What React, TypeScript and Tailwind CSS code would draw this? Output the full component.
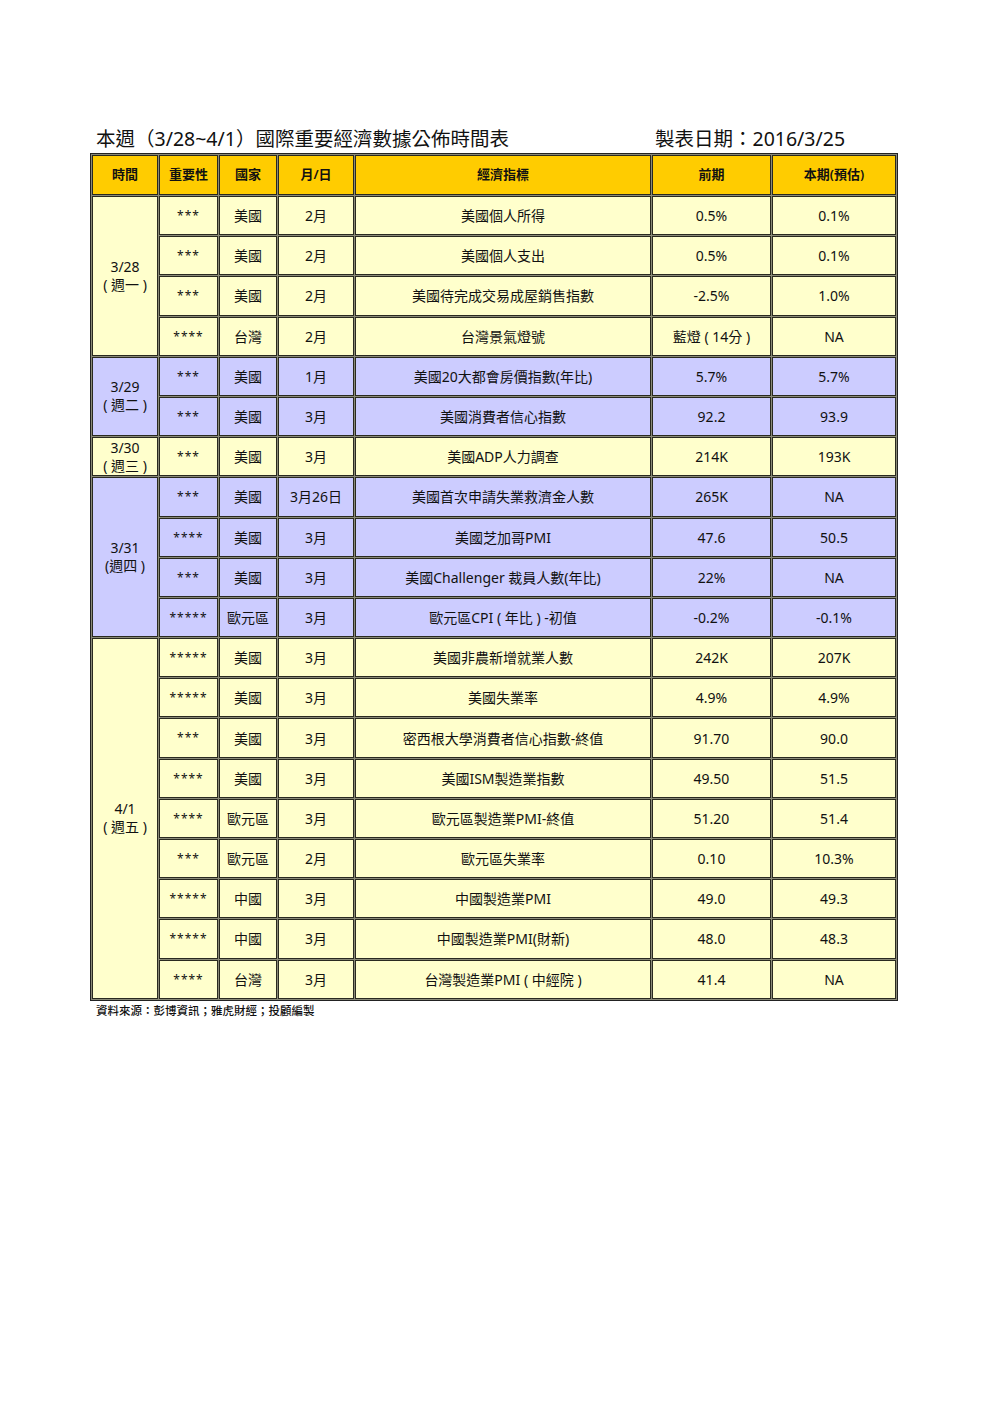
import React from "react";

type Row = {
  stars: string;
  country: string;
  month: string;
  name: string;
  prev: string;
  est: string;
};

type Group = {
  date: string;
  day: string;
  blue: boolean;
  rows: Row[];
};

const groups: Group[] = [
  {
    date: "3/28",
    day: "( 週一 )",
    blue: false,
    rows: [
      { stars: "***", country: "美國", month: "2月", name: "美國個人所得", prev: "0.5%", est: "0.1%" },
      { stars: "***", country: "美國", month: "2月", name: "美國個人支出", prev: "0.5%", est: "0.1%" },
      { stars: "***", country: "美國", month: "2月", name: "美國待完成交易成屋銷售指數", prev: "-2.5%", est: "1.0%" },
      { stars: "****", country: "台灣", month: "2月", name: "台灣景氣燈號", prev: "藍燈 ( 14分 )", est: "NA" },
    ],
  },
  {
    date: "3/29",
    day: "( 週二 )",
    blue: true,
    rows: [
      { stars: "***", country: "美國", month: "1月", name: "美國20大都會房價指數(年比)", prev: "5.7%", est: "5.7%" },
      { stars: "***", country: "美國", month: "3月", name: "美國消費者信心指數", prev: "92.2", est: "93.9" },
    ],
  },
  {
    date: "3/30",
    day: "( 週三 )",
    blue: false,
    rows: [
      { stars: "***", country: "美國", month: "3月", name: "美國ADP人力調查", prev: "214K", est: "193K" },
    ],
  },
  {
    date: "3/31",
    day: "(週四 )",
    blue: true,
    rows: [
      { stars: "***", country: "美國", month: "3月26日", name: "美國首次申請失業救濟金人數", prev: "265K", est: "NA" },
      { stars: "****", country: "美國", month: "3月", name: "美國芝加哥PMI", prev: "47.6", est: "50.5" },
      { stars: "***", country: "美國", month: "3月", name: "美國Challenger 裁員人數(年比)", prev: "22%", est: "NA" },
      { stars: "*****", country: "歐元區", month: "3月", name: "歐元區CPI ( 年比 ) -初值", prev: "-0.2%", est: "-0.1%" },
    ],
  },
  {
    date: "4/1",
    day: "( 週五 )",
    blue: false,
    rows: [
      { stars: "*****", country: "美國", month: "3月", name: "美國非農新增就業人數", prev: "242K", est: "207K" },
      { stars: "*****", country: "美國", month: "3月", name: "美國失業率", prev: "4.9%", est: "4.9%" },
      { stars: "***", country: "美國", month: "3月", name: "密西根大學消費者信心指數-終值", prev: "91.70", est: "90.0" },
      { stars: "****", country: "美國", month: "3月", name: "美國ISM製造業指數", prev: "49.50", est: "51.5" },
      { stars: "****", country: "歐元區", month: "3月", name: "歐元區製造業PMI-終值", prev: "51.20", est: "51.4" },
      { stars: "***", country: "歐元區", month: "2月", name: "歐元區失業率", prev: "0.10", est: "10.3%" },
      { stars: "*****", country: "中國", month: "3月", name: "中國製造業PMI", prev: "49.0", est: "49.3" },
      { stars: "*****", country: "中國", month: "3月", name: "中國製造業PMI(財新)", prev: "48.0", est: "48.3" },
      { stars: "****", country: "台灣", month: "3月", name: "台灣製造業PMI ( 中經院 )", prev: "41.4", est: "NA" },
    ],
  },
];

const headers = ["時間", "重要性", "國家", "月/日", "經濟指標", "前期", "本期(預估)"];

export default function App() {
  return (
    <div className="w-[992px] min-h-[1403px] bg-white text-[#111] font-['Noto_Sans','Noto_Sans_CJK_TC',sans-serif]">
      <div className="ml-[90px] w-[810px] pt-[122px]">
        <div className="grid grid-cols-[565px_1fr] items-end h-[30px] leading-[26px] text-[19.5px]">
          <span className="pl-[6px]">本週（3/28~4/1）國際重要經濟數據公佈時間表</span>
          <span>製表日期：2016/3/25</span>
        </div>
        <table className="mt-[1px] table-fixed w-[808px] border-separate border-spacing-[1px] bg-[#8a8a78] border border-[#222] text-[14px] text-center">
          <colgroup>
            <col className="w-[66px]" />
            <col className="w-[59px]" />
            <col className="w-[58px]" />
            <col className="w-[76px]" />
            <col className="w-[296px]" />
            <col className="w-[119px]" />
            <col />
          </colgroup>
          <thead>
            <tr>
              {headers.map((h) => (
                <th key={h} className="h-[40px] p-0 bg-[#ffcc00] border border-[#2a2a20] font-semibold text-[13px]">
                  {h}
                </th>
              ))}
            </tr>
          </thead>
          <tbody>
            {groups.map((g) =>
              g.rows.map((r, i) => {
                const bg = g.blue ? "bg-[#ccccff]" : "bg-[#ffffcc]";
                const cell = `${bg} border border-[#2a2a20] h-[39.2px] p-0`;
                return (
                  <tr key={g.date + i}>
                    {i === 0 && (
                      <td rowSpan={g.rows.length} className={`${bg} border border-[#2a2a20] p-0 leading-[18px]`}>
                        <div>{g.date}</div>
                        <div className="whitespace-pre">{g.day}</div>
                      </td>
                    )}
                    <td className={`${cell} align-top pt-[10px] text-[12px] tracking-[1px]`}>{r.stars}</td>
                    <td className={cell}>{r.country}</td>
                    <td className={cell}>{r.month}</td>
                    <td className={cell}>{r.name}</td>
                    <td className={`${cell} whitespace-pre`}>{r.prev}</td>
                    <td className={cell}>{r.est}</td>
                  </tr>
                );
              })
            )}
          </tbody>
        </table>
        <div className="pl-[6px] pt-[2px] text-[11.5px] font-medium leading-[16px]">資料來源：彭博資訊；雅虎財經；投顧編製</div>
      </div>
    </div>
  );
}
